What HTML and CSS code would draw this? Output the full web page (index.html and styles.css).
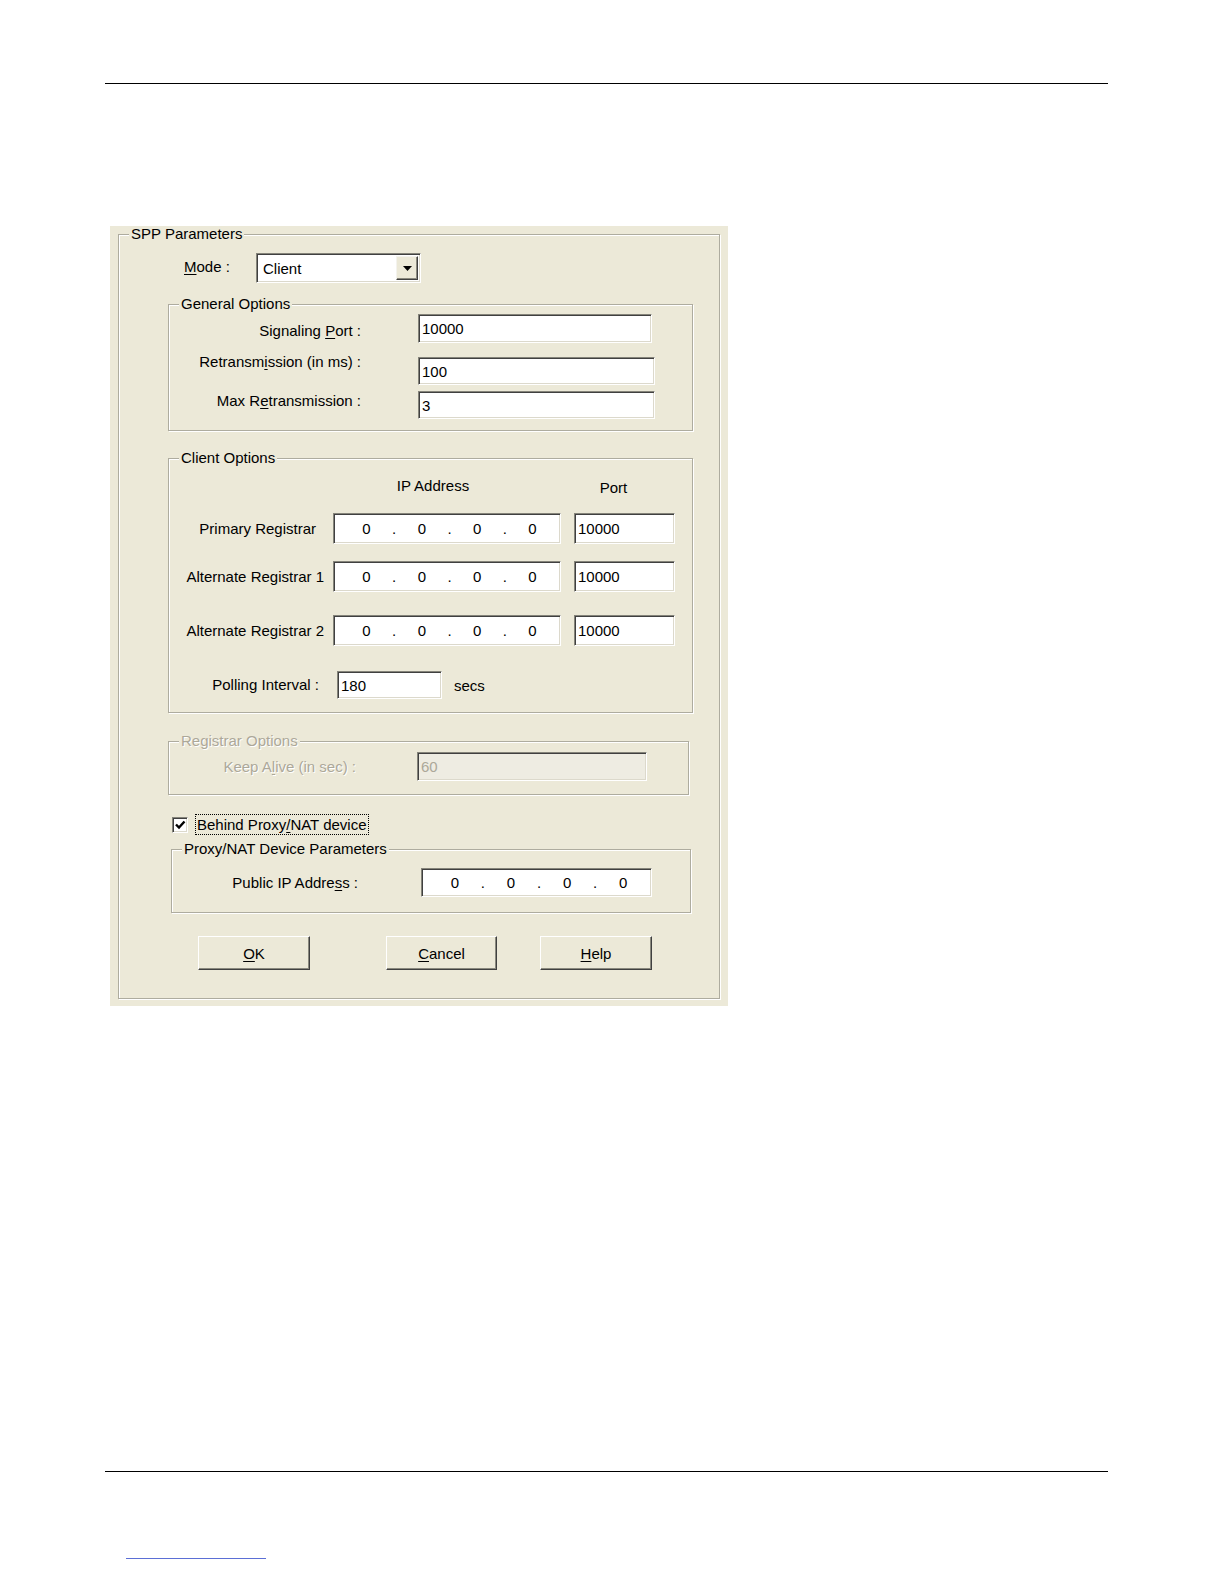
FILE: index.html
```html
<!DOCTYPE html>
<html>
<head>
    <meta charset="UTF-8">
    <title>SPP Parameters</title>
    <link rel="stylesheet" href="styles.css">
</head>
<body>
    <div class="rule rule-top"></div>

    <div class="dialog">
        <div class="group outer">
            <div class="legend">SPP Parameters</div>

            <div class="mode-row">
                <span class="mode-label"><u>M</u>ode :</span>
                <div class="combo">
                    <span class="combo-text">Client</span>
                    <span class="combo-btn">
                        <svg width="9" height="5" viewBox="0 0 9 5"><path d="M0 0h9L4.5 5z" fill="#000"/></svg>
                    </span>
                </div>
            </div>

            <!-- General Options -->
            <div class="group general">
                <div class="legend">General Options</div>
                <div class="frow r1">
                    <label>Signaling <u>P</u>ort :</label>
                    <input type="text" class="field" value="10000">
                </div>
                <div class="frow r2">
                    <label>Retransm<u>i</u>ssion (in ms) :</label>
                    <input type="text" class="field" value="100">
                </div>
                <div class="frow r3">
                    <label>Max R<u>e</u>transmission :</label>
                    <input type="text" class="field" value="3">
                </div>
            </div>

            <!-- Client Options -->
            <div class="group client">
                <div class="legend">Client Options</div>
                <div class="hdr">
                    <span class="hdr-ip">IP Address</span>
                    <span class="hdr-port">Port</span>
                </div>
                <div class="crow c1">
                    <label>Primary Registrar</label>
                    <div class="field ip"><span class="oct">0</span><span class="dot">.</span><span class="oct">0</span><span class="dot">.</span><span class="oct">0</span><span class="dot">.</span><span class="oct">0</span></div>
                    <input type="text" class="field port" value="10000">
                </div>
                <div class="crow c2">
                    <label>Alternate Registrar 1</label>
                    <div class="field ip"><span class="oct">0</span><span class="dot">.</span><span class="oct">0</span><span class="dot">.</span><span class="oct">0</span><span class="dot">.</span><span class="oct">0</span></div>
                    <input type="text" class="field port" value="10000">
                </div>
                <div class="crow c3">
                    <label>Alternate Registrar 2</label>
                    <div class="field ip"><span class="oct">0</span><span class="dot">.</span><span class="oct">0</span><span class="dot">.</span><span class="oct">0</span><span class="dot">.</span><span class="oct">0</span></div>
                    <input type="text" class="field port" value="10000">
                </div>
                <div class="crow poll">
                    <label>Polling Interval :</label>
                    <input type="text" class="field poll-input" value="180">
                    <span class="secs">secs</span>
                </div>
            </div>

            <!-- Registrar Options (disabled) -->
            <div class="group registrar">
                <div class="legend">Registrar Options</div>
                <div class="krow">
                    <label>Keep A<u>l</u>ive (in sec) :</label>
                    <input type="text" class="field" value="60" disabled>
                </div>
            </div>

            <div class="check-row">
                <span class="checkbox">
                    <svg width="12" height="12" viewBox="0 0 12 12"><path d="M2 5.5l3 3l5.5-6" fill="none" stroke="#000" stroke-width="2.4"/></svg>
                </span>
                <span class="check-label">Behind Proxy<u>/</u>NAT device</span>
            </div>

            <!-- Proxy/NAT Device Parameters -->
            <div class="group proxy">
                <div class="legend">Proxy/NAT Device Parameters</div>
                <div class="prow">
                    <label>Public IP Addre<u>s</u>s :</label>
                    <div class="field ip"><span class="oct">0</span><span class="dot">.</span><span class="oct">0</span><span class="dot">.</span><span class="oct">0</span><span class="dot">.</span><span class="oct">0</span></div>
                </div>
            </div>

            <div class="buttons">
                <button class="btn"><u>O</u>K</button>
                <button class="btn btn-cancel"><u>C</u>ancel</button>
                <button class="btn btn-help"><u>H</u>elp</button>
            </div>
        </div>
    </div>

    <div class="rule rule-bottom"></div>
    <div class="link-line"></div>
</body>
</html>
```

FILE: styles.css
```css
body {
    margin: 0;
    font-family: "Liberation Sans", Arial, sans-serif;
    font-size: 15px;
    color: #000;
    background: #fff;
}
u {
    text-decoration-thickness: 1px;
    text-underline-offset: 2px;
}
.rule {
    margin-left: 105px;
    width: 1003px;
    border-top: 1px solid #000;
}
.rule-top {
    margin-top: 83px;
}
.rule-bottom {
    margin-top: 465px;
}
.link-line {
    margin: 86px 0 0 126px;
    width: 140px;
    border-top: 1px solid #5b6fd6;
}

/* Dialog */
.dialog {
    margin: 142px 0 0 110px;
    width: 618px;
    height: 780px;
    box-sizing: border-box;
    padding: 8px;
    background: #ECE9D8;
}
.group {
    box-sizing: border-box;
    border: 1px solid #aeac9f;
    box-shadow: inset 1px 1px 0 #fff, 1px 1px 0 #fff;
}
.legend {
    display: table;
    margin: -9px 0 0 10px;
    padding: 0 2px;
    line-height: 16px;
    background: #ECE9D8;
}
.outer {
    width: 602px;
    height: 765px;
}
label {
    line-height: 18px;
    white-space: nowrap;
}

/* Inputs */
.field {
    box-sizing: border-box;
    margin: 0;
    padding: 0 3px;
    font: inherit;
    color: #000;
    background: #fff;
    border: 1px solid;
    border-color: #85847a #fff #fff #85847a;
    box-shadow: inset 1px 1px 0 #404040, inset -1px -1px 0 #dcd9cc;
    outline: none;
}
.field:disabled {
    background: #EEECE2;
    color: #ACA899;
}

/* Mode combo */
.mode-row {
    display: flex;
    align-items: center;
    height: 30px;
    margin: 11px 0 0 65px;
}
.mode-label {
    width: 72px;
    margin-top: -3px;
}
.combo {
    display: flex;
    align-items: center;
    justify-content: space-between;
    width: 165px;
    height: 30px;
    box-sizing: border-box;
    padding: 2px 2px 2px 6px;
    background: #fff;
    border: 1px solid;
    border-color: #85847a #fff #fff #85847a;
    box-shadow: inset 1px 1px 0 #404040, inset -1px -1px 0 #dcd9cc;
}
.combo-btn {
    display: flex;
    align-items: center;
    justify-content: center;
    width: 22px;
    height: 100%;
    box-sizing: border-box;
    background: #ECE9D8;
    border: 1px solid;
    border-color: #f4f3ee #404040 #404040 #f4f3ee;
    box-shadow: inset -1px -1px 0 #8a897e;
}

/* General Options */
.general {
    width: 525px;
    height: 127px;
    margin: 21px 0 0 49px;
}
.frow {
    display: flex;
    align-items: flex-start;
}
.frow label {
    width: 192px;
    text-align: right;
}
.frow .field {
    margin-left: 57px;
    width: 237px;
    height: 28px;
}
.r1 {
    margin-top: 2px;
}
.r1 label {
    margin-top: 8px;
}
.r1 .field {
    width: 234px;
    height: 29px;
}
.r2 {
    margin-top: 14px;
}
.r2 label {
    margin-top: -4px;
}
.r3 {
    margin-top: 6px;
}
.r3 label {
    margin-top: 1px;
}

/* Client Options */
.client {
    width: 525px;
    height: 255px;
    margin: 27px 0 0 49px;
}
.hdr {
    display: flex;
    margin-top: 11px;
    line-height: 18px;
}
.hdr-ip {
    margin-left: 164px;
    width: 228px;
    box-sizing: border-box;
    padding-right: 28px;
    text-align: center;
}
.hdr-port {
    margin: 2px 0 0 13px;
    width: 101px;
    box-sizing: border-box;
    padding-right: 22px;
    text-align: center;
}
.crow {
    display: flex;
    align-items: center;
}
.crow label {
    width: 155px;
    box-sizing: border-box;
    text-align: right;
}
.c1 {
    margin-top: 16px;
}
.c1 label {
    padding-right: 8px;
}
.c2 {
    margin-top: 17px;
}
.c3 {
    margin-top: 23px;
}
.ip {
    display: flex;
    align-items: center;
    padding-left: 8px;
}
.ip .oct {
    width: 50px;
    text-align: center;
}
.ip .dot {
    width: 6.5px;
    text-align: center;
}
.crow .ip {
    margin-left: 9px;
    width: 228px;
    height: 31px;
}
.port {
    margin-left: 13px;
    width: 101px;
    height: 31px;
}
.poll {
    margin-top: 25px;
}
.poll label {
    padding-right: 5px;
}
.poll-input {
    margin-left: 13px;
    width: 105px;
    height: 28px;
}
.secs {
    margin-left: 12px;
}

/* Registrar Options */
.registrar {
    width: 521px;
    height: 54px;
    margin: 28px 0 0 49px;
}
.registrar .legend,
.registrar label {
    color: #ACA899;
    text-shadow: 1px 1px 0 #fff;
}
.krow {
    display: flex;
    align-items: center;
    margin-top: 3px;
}
.krow label {
    width: 187px;
    text-align: right;
}
.krow .field {
    margin-left: 61px;
    width: 230px;
    height: 29px;
}

/* Checkbox */
.check-row {
    display: flex;
    align-items: center;
    height: 21px;
    margin: 19px 0 0 53px;
}
.checkbox {
    display: flex;
    align-items: center;
    justify-content: center;
    width: 16px;
    height: 16px;
    box-sizing: border-box;
    background: #fff;
    border: 1px solid;
    border-color: #85847a #fff #fff #85847a;
    box-shadow: inset 1px 1px 0 #404040, inset -1px -1px 0 #dcd9cc;
}
.check-label {
    margin-left: 7px;
    padding: 0 1px;
    line-height: 19px;
    border: 1px dotted #000;
}

/* Proxy/NAT */
.proxy {
    width: 520px;
    height: 64px;
    margin: 14px 0 0 52px;
}
.prow {
    display: flex;
    align-items: center;
    margin-top: 11px;
}
.prow label {
    width: 186px;
    text-align: right;
}
.prow .ip {
    margin-left: 63px;
    width: 231px;
    height: 29px;
}

/* Buttons */
.buttons {
    display: flex;
    margin: 23px 0 0 79px;
}
.btn {
    width: 112px;
    height: 34px;
    margin: 0;
    padding: 0;
    font: inherit;
    color: #000;
    background: #ECE9D8;
    border: 1px solid;
    border-color: #fff #404040 #404040 #fff;
    box-shadow: inset -1px -1px 0 #8a897e;
}
.btn-cancel {
    margin-left: 76px;
    width: 111px;
}
.btn-help {
    margin-left: 43px;
}
```
